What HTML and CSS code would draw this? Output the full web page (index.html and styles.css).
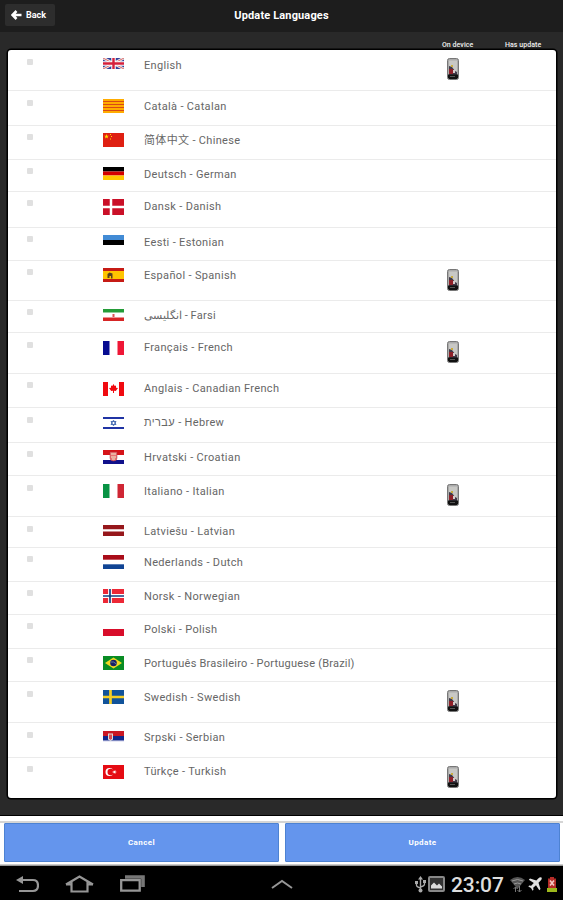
FILE: index.html
```html
<!DOCTYPE html>
<html lang="en">
<head>
<meta charset="utf-8">
<title>Update Languages</title>
<link rel="stylesheet" href="styles.css">
</head>
<body>
<svg width="0" height="0" class="defs"><defs>
<symbol id="phone" viewBox="0 0 12 22"><rect x=".5" y=".5" width="11" height="21" rx="2" fill="#aaa" stroke="#777"/><rect x="2" y="2.500" width="8" height="13" fill="#c8c8c5"/><path d="M2 8l3 1 3 4 2 1v3H2z" fill="#403a48"/><path d="M2 11h4v5H2z" fill="#8d2028"/><path d="M4 7h2v2H4z" fill="#c8ab3e"/><path d="M6 12h2v3H6z" fill="#d6cccc"/><path d="M1 16.500h10v3l-1 1.500H2l-1-1.500z" fill="#111"/><path d="M3 18.500h5" stroke="#555"/></symbol>
</defs></svg>
<header class="bar"><button class="back"><svg width="11" height="10" viewBox="0 0 11 10"><path d="M5.500 1L1.500 5l4 4M2 5h8.500" fill="none" stroke="#fff" stroke-width="2.600"/></svg>Back</button><h1>Update Languages</h1><span class="bar-end"></span></header>
<div class="columns"><span class="on-device">On device</span><span class="has-update">Has update</span></div>
<main class="list">
<div class="row h41"><i class="check"></i><svg class="flag" height="11" viewBox="0 0 21 11"><path fill="#33409a" d="M0 0h21v11H0z"/><path d="M0 0l21 11M21 0L0 11" stroke="#eee" stroke-width="2.800"/><path d="M0 0l21 11M21 0L0 11" stroke="#d66" stroke-width="1"/><path d="M10.500 0v11M0 5.500h21" stroke="#fff" stroke-width="4.500"/><path d="M10.500 0v11M0 5.500h21" stroke="#d5203c" stroke-width="2.400"/></svg><span class="name low">English</span><svg class="phone"><use href="#phone"/></svg></div>
<div class="row h35"><i class="check"></i><svg class="flag" height="14" viewBox="0 0 21 14"><path fill="#ffac00" d="M0 0h21v14H0z"/><path d="M0 2.500h21M0 5.500h21M0 8.500h21M0 11.500h21" stroke="#d94a14" stroke-width="1"/></svg><span class="name low">Català - Catalan</span></div>
<div class="row h34"><i class="check"></i><svg class="flag up" height="14" viewBox="0 0 21 14"><path fill="#df2012" d="M0 0h21v14H0z"/><path fill="#fd0" d="M3.500 1l.6 1.700h1.800L4.500 3.800 5 5.500l-1.500-1L2 5.500l.5-1.700L1.100 2.700h1.800zM7 1h1v1H7zM8 3h1v1H8zM7 5.500h1v1H7z"/></svg><span class="name"><span class="cjk">简体中文</span> - Chinese</span></div>
<div class="row h32"><i class="check"></i><svg class="flag up" height="13" viewBox="0 0 21 13"><path d="M0 0h21v4.500H0z"/><path fill="#d40000" d="M0 4.500h21v4H0z"/><path fill="#ffc900" d="M0 8.500h21V13H0z"/></svg><span class="name">Deutsch - German</span></div>
<div class="row h36"><i class="check"></i><svg class="flag up" height="16" viewBox="0 0 21 16"><path fill="#ca1028" d="M0 0h21v16H0z"/><path d="M8 0v16M0 8h21" stroke="#fff" stroke-width="2.500"/></svg><span class="name">Dansk - Danish</span></div>
<div class="row h33"><i class="check"></i><svg class="flag up" height="10" viewBox="0 0 21 10"><path fill="#428bd5" d="M0 0h21v5H0z"/><path d="M0 5h21v5H0z"/></svg><span class="name">Eesti - Estonian</span></div>
<div class="row h40"><i class="check"></i><svg class="flag up" height="14" viewBox="0 0 21 14"><path fill="#c61b15" d="M0 0h21v14H0z"/><path fill="#ffc400" d="M0 3h21v8H0z"/><path fill="#594020" d="M4.500 6l2-1.500 3 1v5H8V8H6.500v2H4.500z"/></svg><span class="name">Español - Spanish</span><svg class="phone"><use href="#phone"/></svg></div>
<div class="row h32"><i class="check"></i><svg class="flag" height="12" viewBox="0 0 21 12"><path fill="#fff" d="M0 0h21v12H0z"/><path fill="#249c38" d="M0 0h21v3.500H0z"/><path fill="#d62525" d="M0 8.500h21V12H0z"/><path d="M10.500 5v3" stroke="#d95555" stroke-width="2"/></svg><span class="name"><bdi class="farsi">انگلیسی</bdi> - Farsi</span></div>
<div class="row h41"><i class="check"></i><svg class="flag" height="14" viewBox="0 0 21 14"><path fill="#070c91" d="M0 0h6.500v14H0z"/><path fill="#ef1736" d="M14.500 0H21v14h-6.500z"/></svg><span class="name">Français - French</span><svg class="phone"><use href="#phone"/></svg></div>
<div class="row h34"><i class="check"></i><svg class="flag" height="14" viewBox="0 0 21 14"><path fill="#f00a10" d="M0 0h5v14H0zM16 0h5v14h-5zM10.500 2l1.200 2 1.300-.5v2.200l2 .3-2.200 3-1.800-.2V11h-1V8.800L8.200 9 6 6l2-.3V3.500l1.300.5z"/></svg><span class="name">Anglais - Canadian French</span></div>
<div class="row h35"><i class="check"></i><svg class="flag" height="14" viewBox="0 0 21 14"><path d="M0 2h21M0 12h21" stroke="#2034a4" stroke-width="2.200"/><path d="M10.500 4.200L13 8.500H8zM10.500 9.800L8 5.500h5z" fill="none" stroke="#4e71b5"/></svg><span class="name"><bdi class="hebrew">עברית</bdi> - Hebrew</span></div>
<div class="row h33"><i class="check"></i><svg class="flag up" height="14" viewBox="0 0 21 14"><path fill="#d51318" d="M0 0h21v5H0z"/><path fill="#fff" d="M0 5h21v5H0z"/><path fill="#10118b" d="M0 10h21v4H0z"/><path fill="#e77474" stroke="#b33844" stroke-width=".5" d="M7 2h7v6q0 3-3.500 3T7 8z"/><path d="M8 4h5M8 7h5M9 9h3" stroke="#eec"/></svg><span class="name">Hrvatski - Croatian</span></div>
<div class="row h41"><i class="check"></i><svg class="flag" height="14" viewBox="0 0 21 14"><path fill="#089344" d="M0 0h6.500v14H0z"/><path fill="#cf2634" d="M14.500 0H21v14h-6.500z"/></svg><span class="name low">Italiano - Italian</span><svg class="phone"><use href="#phone"/></svg></div>
<div class="row h31"><i class="check"></i><svg class="flag" height="11" viewBox="0 0 21 11"><path fill="#96171b" d="M0 0h21v4.300H0zM0 6.500h21V11H0z"/></svg><span class="name">Latviešu - Latvian</span></div>
<div class="row h34"><i class="check"></i><svg class="flag up" height="14" viewBox="0 0 21 14"><path fill="#a90c19" d="M0 0h21v4.700H0z"/><path fill="#104494" d="M0 9.300h21V14H0z"/></svg><span class="name">Nederlands - Dutch</span></div>
<div class="row h33"><i class="check"></i><svg class="flag up" height="14" viewBox="0 0 21 14"><path fill="#ed2836" d="M0 0h21v14H0z"/><path d="M7 0v14M0 7h21" stroke="#fff" stroke-width="3.800"/><path d="M7 0v14M0 7h21" stroke="#14407f" stroke-width="1.700"/></svg><span class="name">Norsk - Norwegian</span></div>
<div class="row h34"><i class="check"></i><svg class="flag up" height="14" viewBox="0 0 21 14"><path fill="#d80d2a" d="M0 7h21v7H0z"/></svg><span class="name">Polski - Polish</span></div>
<div class="row h33"><i class="check"></i><svg class="flag up" height="14" viewBox="0 0 21 14"><path fill="#098c24" d="M0 0h21v14H0z"/><path fill="#f1d823" d="M2 7l8.500-5.500L19 7l-8.500 5.500z"/><circle cx="10.500" cy="7" r="3.300" fill="#171f66"/><path d="M7.500 6q3-1 6 2" fill="none" stroke="#81a3b6" stroke-width=".7"/></svg><span class="name long">Português Brasileiro - Portuguese (Brazil)</span></div>
<div class="row h41"><i class="check"></i><svg class="flag" height="14" viewBox="0 0 21 14"><path fill="#11539a" d="M0 0h21v14H0z"/><path d="M7.500 0v14M0 7h21" stroke="#f5ce26" stroke-width="2.700"/></svg><span class="name low">Swedish - Swedish</span><svg class="phone"><use href="#phone"/></svg></div>
<div class="row h35"><i class="check"></i><svg class="flag" height="11" viewBox="0 0 21 11"><path fill="#ca1724" d="M0 0h21v5H0z"/><path fill="#10278b" d="M0 5h21v5H0z"/><path fill="#e8e8f5" d="M0 9.500h21V11H0z"/><path fill="#ddd" d="M5 2.500h5v6L7.500 10 5 8.500z"/><path fill="#dc4b51" d="M6 3.500h3v4L7.500 9 6 7.500z"/></svg><span class="name">Srpski - Serbian</span></div>
<div class="row h40"><i class="check"></i><svg class="flag up" height="14" viewBox="0 0 21 14"><path fill="#e50b13" d="M0 0h21v14H0z"/><circle cx="6.500" cy="7" r="4" fill="#fff"/><circle cx="7.700" cy="7" r="3.200" fill="#e50b13"/><path fill="#fff" d="M9 7l2-.7 1.300-1.300v1.500L14 7l-1.700.5V9L11 7.700z"/></svg><span class="name high">Türkçe - Turkish</span><svg class="phone"><use href="#phone"/></svg></div>
</main>
<footer class="actions"><button>Cancel</button><button>Update</button></footer>
<nav class="system">
<svg class="nav-back" width="23" height="17" viewBox="0 0 23 17"><path d="M6 4h11q5 0 5 5.500T17 15H3" fill="none" stroke="#969696" stroke-width="2.200"/><path d="M0 4l7-4v8z" fill="#969696"/></svg>
<svg class="nav-home" width="29" height="18" viewBox="0 0 29 18"><path d="M1 9.500L14.500 1.500 28 9.500M6.500 7v9.500h16V7M1 9.500h5.500M22.500 9.500H28" fill="none" stroke="#969696" stroke-width="2.200"/></svg>
<svg class="nav-recent" width="25" height="17" viewBox="0 0 25 17"><path d="M1.200 5.200h18.500v10.500H1.200z" fill="none" stroke="#969696" stroke-width="2.300"/><path d="M5 2h18v10" fill="none" stroke="#777" stroke-width="3.600"/></svg>
<svg class="nav-up" width="22" height="10" viewBox="0 0 22 10"><path d="M1 9l10-7 10 7" fill="none" stroke="#969696" stroke-width="2"/></svg>
<div class="status">
<svg width="11" height="17" viewBox="0 0 11 17"><path d="M5.500 2v12M1.500 6v3q0 2 4 3M9.500 5v3q0 2-4 3" fill="none" stroke="#aaa" stroke-width="1.400"/><path d="M5.500 0L8 3.500H3zM0 5h3v3H0zM8 4h3v3H8z" fill="#aaa"/><circle cx="5.500" cy="14.500" r="2" fill="#aaa"/></svg>
<svg class="photo" width="17" height="16" viewBox="0 0 17 16"><rect x="1" y="1" width="15" height="14" rx="1" fill="#333" stroke="#888" stroke-width="2"/><path d="M3 12.500v-3l3-3 3 3 2-2 3 3v2z" fill="#ddd"/></svg>
<span class="clock">23:07</span>
<svg class="wifi" width="15" height="17" viewBox="0 0 15 17"><path d="M0 4q7.500-6 15 0L7.500 13z" fill="#555"/><path d="M2 5q5.500-3 11 0M4 8q3.500-2 7 0" fill="none" stroke="#999"/><path d="M5.500 16v-5m-2 2l2-2 2 2M9.500 10v6m-2-2l2 2 2-2" fill="none" stroke="#777"/></svg>
<svg class="plane" width="14" height="14" viewBox="0 0 14 14"><path d="M13.500.5q-1.500-.8-3 .8L8.300 3.500 2 1.500.8 2.700l5 3.300-2.600 2.800L1.200 8.500.3 9.400 3 11l1.600 2.700.9-.9-.3-2L8 8.200l3.300 5 1.200-1.200-2-6.300 2.200-2.200q1.600-1.500.8-3z" fill="#e2e2e2"/></svg>
<svg class="battery" width="10" height="16" viewBox="0 0 10 16"><path d="M3 0h4v1.500h2V11H1V1.500h2z" fill="#b52c28"/><path d="M3 3.500l4 5m0-5l-4 5" stroke="#f5c9c5" stroke-width="1.600"/><path d="M0 11h10v4H0z" fill="#9db81c"/></svg>
</div>
</nav>
</body>
</html>
```
FILE: styles.css
```css
* { box-sizing: border-box; }
body { margin: 0; width: 563px; height: 900px; overflow: hidden; background: #292929; font-family: Roboto, "Noto Sans CJK SC", sans-serif; display: flex; flex-direction: column; }
button { border: 0; font-family: inherit; }
svg { flex: none; }
.defs { display: none; }
.bar { height: 32px; flex: none; display: flex; align-items: center; padding: 0 5px; background: #1d1d1d; color: #fff; }
.back { width: 50px; height: 22px; margin-bottom: 2px; padding: 0 0 0 6px; display: flex; align-items: center; gap: 4px; background: #2d2d2d; border-radius: 2px; color: #fff; font-size: 9px; font-weight: 700; }
.bar h1 { flex: 1; margin: 0; text-align: center; font-size: 11px; font-weight: 700; line-height: 30px; letter-spacing: .14px; }
.bar-end { width: 50px; }
.columns { height: 18px; flex: none; display: flex; justify-content: flex-end; padding: 8px 21px 0 0; color: #f0f0f0; font-size: 7px; font-weight: 500; line-height: 10px; letter-spacing: .05px; white-space: nowrap; }
.on-device { width: 63px; }
.has-update { width: 37px; }
.list { flex: none; height: 748px; margin: 0 7px 0 8px; background: #fff; border-radius: 3px; box-shadow: 0 0 0 1.5px #000; }
.row { display: flex; align-items: flex-start; border-bottom: 1px solid #ebebeb; }
.row:last-child { border-bottom: 0; }
.h31 { height: 31px; } .h32 { height: 32px; } .h33 { height: 33px; } .h34 { height: 34px; } .h35 { height: 35px; } .h36 { height: 36px; } .h40 { height: 40px; } .h41 { height: 41px; }
.check { width: 6px; height: 6px; margin: 9px 0 0 19px; background: #e0e0e0; border-radius: 1px; }
.h33 .check, .h34 .check, .h32 .check, .h36 .check, .h40 .check { margin-top: 8px; }
.flag { width: 21px; margin: 8px 0 0 70px; }
.flag.up { margin-top: 7px; }
.name { width: 300px; margin: 7px 0 0 20px; color: #666; font-size: 11px; line-height: 16px; height: 16px; letter-spacing: .33px; white-space: nowrap; }
.name.low { margin-top: 8px; }
.name.high { margin-top: 6px; }
.name.long { letter-spacing: .22px; }
.cjk { font-family: "Noto Sans CJK SC", sans-serif; line-height: 1; }
.farsi { letter-spacing: 0; }
.hebrew { letter-spacing: .4px; }
.phone { width: 12px; height: 22px; margin: 8px 0 0 3px; }
.actions { height: 51px; flex: none; margin-top: 17px; padding: 8px 3px 4px 4px; display: flex; gap: 6px; background: linear-gradient(#000 1px, #fff 1px, #fff 6px, #d5d5d5 6px, #d5d5d5 8px, #fff 8px, #fff 49px, #999 50px); }
.actions button { flex: 1; background: #6495ed; border: 1px solid #4d82d2; border-radius: 1px; color: #fff; font-size: 8px; font-weight: 700; letter-spacing: .4px; }
.system { flex: 1; background: #000; display: flex; align-items: flex-start; padding-left: 16px; }
.nav-back { margin-top: 10px; }
.nav-home { margin: 9px 0 0 26px; }
.nav-recent { margin: 9px 0 0 26px; }
.nav-up { margin: 13px 0 0 126px; }
.status { margin-left: 122px; padding-top: 10px; display: flex; align-items: flex-start; }
.photo { margin-left: 2px; }
.clock { width: 54px; margin: -3px 0 0 6px; color: #ddd; font-size: 21px; font-weight: 500; letter-spacing: -.1px; line-height: 24px; }
.wifi { margin-left: 5px; }
.plane { margin: 1px 0 0 3px; }
.battery { margin: 1px 0 0 5px; }
```
